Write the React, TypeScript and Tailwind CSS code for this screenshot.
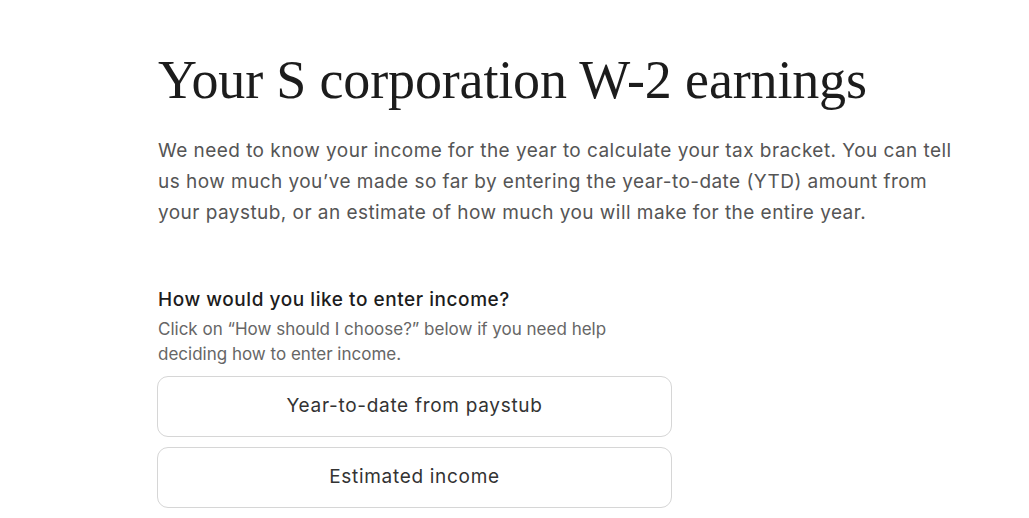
import React from "react";

export default function App() {
  return (
    <div className="min-h-screen bg-white">
      <div className="pl-[158px] pt-[50px] w-[1000px]">
        <h1 className="text-[54px] leading-[60px] text-[#1c1c1c] tracking-[-0.15px] whitespace-nowrap" style={{ fontFamily: '"Liberation Serif", serif' }}>
          Your S corporation W-2 earnings
        </h1>
        <p className="mt-[25px] text-[19px] leading-[31px] tracking-[0.45px] text-[#555] w-[805px]" style={{ fontFamily: 'Inter, sans-serif' }}>
          We need to know your income for the year to calculate your tax bracket. You can tell us how much you’ve made so far by entering the year-to-date (YTD) amount from your paystub, or an estimate of how much you will make for the entire year.
        </p>
        <div className="mt-[60px] w-[514px]" style={{ fontFamily: 'Inter, sans-serif' }}>
          <div className="text-[19px] leading-[24px] tracking-[0.55px] font-medium text-[#1c1c1c]">How would you like to enter income?</div>
          <div className="mt-[5px] w-[470px] text-[17px] leading-[25px] text-[#666]">
            Click on “How should I choose?” below if you need help deciding how to enter income.
          </div>
          <div className="mt-[9px] flex flex-col gap-[10px] -ml-px">
            <button className="h-[61px] w-full rounded-[11px] border border-[#d6d6d6] bg-white text-[19px] tracking-[0.7px] text-[#333]">Year-to-date from paystub</button>
            <button className="h-[61px] w-full rounded-[11px] border border-[#d6d6d6] bg-white text-[19px] tracking-[0.7px] text-[#333]">Estimated income</button>
          </div>
        </div>
      </div>
    </div>
  );
}
